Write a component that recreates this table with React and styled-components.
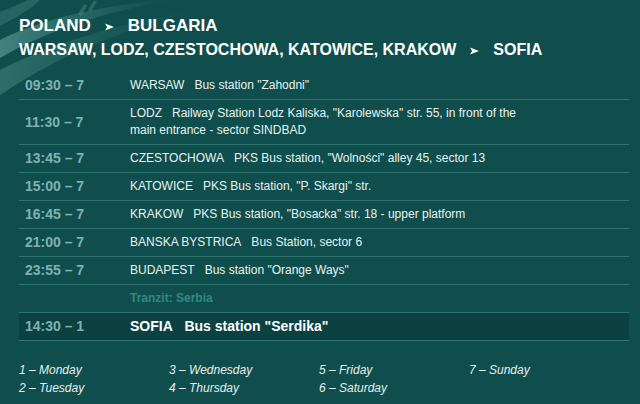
import React from 'react';
import styled, { createGlobalStyle } from 'styled-components';

const GlobalStyle = createGlobalStyle`
  html, body {
    margin: 0;
    padding: 0;
    background: #0f4e4c;
  }
  body {
    font-family: "Liberation Sans", Arial, sans-serif;
    color: #e8f2f0;
  }
`;

const stops = [
  { time: '09:30 – 7', city: 'WARSAW', place: 'Bus station "Zahodni"' },
  {
    time: '11:30 – 7',
    city: 'LODZ',
    place: 'Railway Station Lodz Kaliska, "Karolewska" str. 55, in front of the main entrance - sector SINDBAD',
  },
  { time: '13:45 – 7', city: 'CZESTOCHOWA', place: 'PKS Bus station, "Wolności" alley 45, sector 13' },
  { time: '15:00 – 7', city: 'KATOWICE', place: 'PKS Bus station, "P. Skargi" str.' },
  { time: '16:45 – 7', city: 'KRAKOW', place: 'PKS Bus station, "Bosacka" str. 18 - upper platform' },
  { time: '21:00 – 7', city: 'BANSKA BYSTRICA', place: 'Bus Station, sector 6' },
  { time: '23:55 – 7', city: 'BUDAPEST', place: 'Bus station "Orange Ways"' },
];

const days = [
  '1 – Monday',
  '3 – Wednesday',
  '5 – Friday',
  '7 – Sunday',
  '2 – Tuesday',
  '4 – Thursday',
  '6 – Saturday',
];

// city name and address are separated by a few hard spaces, like the original page
const gap = '\u00a0\u00a0 ';

const Arrow = () => (
  <ArrowIcon width="9" height="8" viewBox="0 0 9 8">
    <polygon points="0,0.5 9,4 0,7.5 2.2,4" fill="#ffffff" />
  </ArrowIcon>
);

// faded swoosh from the page's background artwork
const Swoosh = () => (
  <Decor width="260" height="110" viewBox="0 0 260 110">
    <defs>
      <linearGradient id="sw" x1="0" y1="0" x2="1" y2="0">
        <stop offset="0" stopColor="#6aaea6" stopOpacity="0.55" />
        <stop offset="0.6" stopColor="#3f8a82" stopOpacity="0.3" />
        <stop offset="1" stopColor="#2a7068" stopOpacity="0" />
      </linearGradient>
    </defs>
    <path d="M0 40 C 40 20, 90 8, 160 0 L 175 0 C 100 12, 45 32, 0 58 Z" fill="url(#sw)" />
    <path d="M0 70 C 50 45, 110 25, 200 10 C 120 30, 60 55, 0 95 Z" fill="url(#sw)" opacity="0.6" />
    <path d="M40 0 C 30 10, 12 20, 0 26 L 0 12 C 10 8, 20 4, 28 0 Z" fill="#5aa097" opacity="0.3" />
    <path d="M78 14 L 84 4 L 87 6 L 81 16 Z M 88 10 L 94 0 L 97 2 L 91 12 Z" fill="#6fb3aa" opacity="0.25" />
  </Decor>
);

const App = () => (
  <Page>
    <GlobalStyle />
    <Swoosh />
    <Header>
      <Title size={17}>
        <span>POLAND</span>
        <Arrow />
        <span>BULGARIA</span>
      </Title>
      <Title size={16}>
        <span>WARSAW, LODZ, CZESTOCHOWA, KATOWICE, KRAKOW</span>
        <Arrow />
        <span>SOFIA</span>
      </Title>
    </Header>

    <Table>
      {stops.map(stop => (
        <Row key={stop.time}>
          <Time>{stop.time}</Time>
          <Place>{stop.city + gap + stop.place}</Place>
        </Row>
      ))}
      <Row plain>
        <span />
        <Transit>Tranzit: Serbia</Transit>
      </Row>
      <Row final>
        <Time>14:30 – 1</Time>
        <Place final>{'SOFIA' + gap + 'Bus station "Serdika"'}</Place>
      </Row>
    </Table>

    <Legend>
      {days.map(day => (
        <Day key={day}>{day}</Day>
      ))}
    </Legend>
  </Page>
);

const Page = styled.div`
  position: relative;
  width: 640px;
  height: 404px;
  box-sizing: border-box;
  padding: 14px 0 0 19px;
  background: #0f4e4c;
  overflow: hidden;
`;

const Decor = styled.svg`
  position: absolute;
  top: 0;
  left: 0;
  pointer-events: none;
`;

const Header = styled.div`
  position: relative;
  display: flex;
  flex-direction: column;
`;

const Title = styled.div`
  display: flex;
  align-items: center;
  gap: 14px;
  height: 24px;
  font-size: ${p => p.size}px;
  font-weight: 700;
  color: #ffffff;
  white-space: nowrap;
`;

const ArrowIcon = styled.svg`
  flex: none;
  margin-top: 2px;
`;

const Table = styled.div`
  position: relative;
  width: 610px;
  margin-top: 10px;
  display: flex;
  flex-direction: column;
`;

const Row = styled.div`
  display: grid;
  grid-template-columns: 111px 1fr;
  align-items: center;
  min-height: 27px;
  box-sizing: border-box;
  padding: 5px 0;
  border-bottom: ${p => (p.plain ? 'none' : '1px solid #2d736e')};
  border-top: ${p => (p.final ? '1px solid #2d736e' : 'none')};
  background: ${p => (p.final ? '#0b4140' : 'transparent')};
`;

const Time = styled.div`
  padding-left: 6px;
  font-size: 14px;
  font-weight: 700;
  line-height: 17px;
  color: #7fb1b3;
`;

const Place = styled.div`
  font-size: ${p => (p.final ? 14 : 12)}px;
  font-weight: ${p => (p.final ? 700 : 400)};
  line-height: 17px;
  color: ${p => (p.final ? '#ffffff' : '#e8f2f0')};
  padding-right: 100px;
`;

const Transit = styled.div`
  font-size: 12px;
  font-weight: 700;
  line-height: 17px;
  color: #2e8a84;
`;

const Legend = styled.div`
  position: relative;
  margin-top: 20px;
  display: grid;
  grid-template-columns: repeat(4, 150px);
  font-size: 12px;
  font-style: italic;
  line-height: 18px;
  color: #e6eeee;
`;

const Day = styled.div`
  white-space: nowrap;
`;

export default App;
